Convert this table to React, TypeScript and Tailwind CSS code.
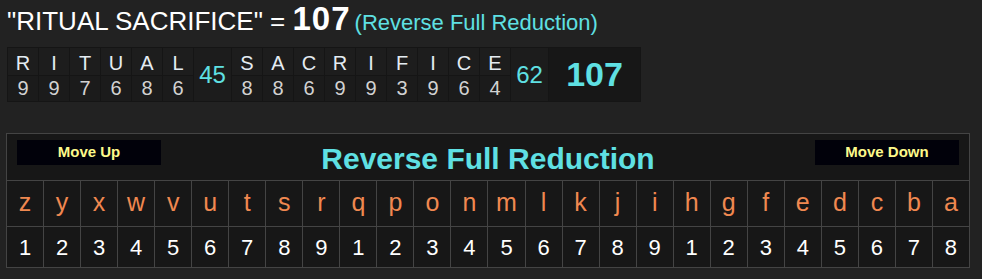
import React from 'react';

type Word = { letters: string[]; values: number[]; total: number };

const words: Word[] = [
  { letters: ['R', 'I', 'T', 'U', 'A', 'L'], values: [9, 9, 7, 6, 8, 6], total: 45 },
  { letters: ['S', 'A', 'C', 'R', 'I', 'F', 'I', 'C', 'E'], values: [8, 8, 6, 9, 9, 3, 9, 6, 4], total: 62 },
];

const alphabet = 'zyxwvutsrqponmlkjihgfedcba'.split('');
// reverse full reduction: z=1 ... r=9, q=1 ... i=9, h=1 ... a=8
const reduced = alphabet.map((_, i) => (i % 9) + 1);

const font = { fontFamily: '"Liberation Sans", Arial, sans-serif' };

const Breakdown: React.FC = () => (
  <div className="flex w-[634px] gap-px bg-[#151515] p-px">
    {words.map((w, wi) => (
      <React.Fragment key={wi}>
        {w.letters.map((l, i) => (
          <div key={i} className="flex w-[30px] flex-col gap-px">
            <div className="flex h-[27px] items-center justify-center bg-[#1d1d1d] pt-[3px] text-[20px] leading-none text-[#e4ecf2]">{l}</div>
            <div className="flex h-[25px] items-center justify-center bg-[#1b1b1b] pb-[1px] text-[20px] leading-none text-[#d2d2d2]">{w.values[i]}</div>
          </div>
        ))}
        <div className="flex w-[37px] items-center justify-center bg-[#1c1c1c] text-[24px] text-[#5fe0e3]">{w.total}</div>
      </React.Fragment>
    ))}
    <div className="flex flex-1 items-center justify-center bg-[#171717] text-[34px] font-bold text-[#5fe0e3]">107</div>
  </div>
);

const MoveButton: React.FC<{ label: string; className?: string }> = ({ label, className }) => (
  <button className={`h-[25px] w-[144px] bg-[#01010a] text-[15px] font-bold text-[#fdf98a] ${className ?? ''}`}>{label}</button>
);

export default function App() {
  return (
    <div className="h-[279px] w-[982px] overflow-hidden bg-[#222222]" style={font}>
      <div className="flex items-baseline whitespace-nowrap pl-[7px] pt-[1px] leading-[36px]">
        <span className="text-[26px] text-white">"RITUAL SACRIFICE" =&nbsp;</span>
        <span className="text-[33px] font-bold tracking-[1px] text-white">107</span>
        <span className="ml-[4px] text-[22px] text-[#5fe0e3]">(Reverse Full Reduction)</span>
      </div>

      <div className="ml-[7px] mt-[6px]">
        <Breakdown />
      </div>

      <div className="ml-[6px] mt-[31px] w-[964px] border border-[#444444] bg-[#444444]">
        <div className="grid h-[46px] grid-cols-[1fr_auto_1fr] bg-[#171717] px-[10px] pt-[6px]">
          <MoveButton label="Move Up" className="justify-self-start" />
          <h2 className="mt-[2px] text-[30px] font-bold leading-[34px] text-[#5fe0e3]">Reverse Full Reduction</h2>
          <MoveButton label="Move Down" className="justify-self-end" />
        </div>
        <div className="mt-px grid grid-cols-[repeat(26,minmax(0,1fr))] gap-px">
          {alphabet.map((l) => (
            <div key={l} className="flex h-[45px] items-center justify-center bg-[#171717] pb-[2px] text-[25px] text-[#f08850]">{l}</div>
          ))}
          {reduced.map((n, i) => (
            <div key={i} className="flex h-[40px] items-center justify-center bg-[#171717] text-[22px] text-white">{n}</div>
          ))}
        </div>
      </div>
    </div>
  );
}
